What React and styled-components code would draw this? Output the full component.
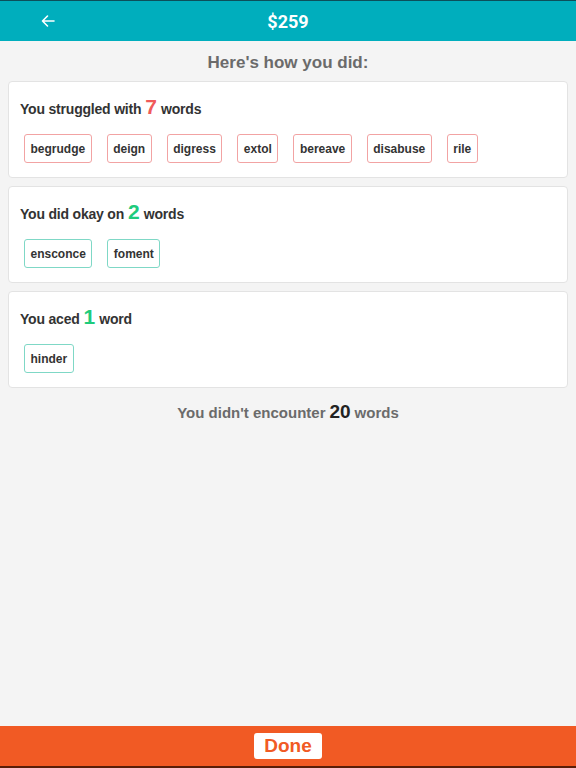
import React from "react";
import styled, { createGlobalStyle } from "styled-components";

const Global = createGlobalStyle`
  html, body { margin: 0; padding: 0; height: 100%; }
  body {
    background: #f4f4f4;
    font-family: "Liberation Sans", Arial, sans-serif;
    -webkit-font-smoothing: antialiased;
  }
  #root { height: 100%; }
`;

const Page = styled.div`
  height: 768px;
  display: flex;
  flex-direction: column;
  background: #f4f4f4;
`;

const Header = styled.header`
  height: 40px;
  border-top: 1px solid #0c4f5a;
  background: #00aebd;
  display: grid;
  grid-template-columns: 96px 1fr 96px;
  align-items: center;
`;

const BackButton = styled.button`
  border: 0;
  background: none;
  padding: 0;
  width: 96px;
  height: 40px;
  display: flex;
  align-items: center;
  justify-content: center;
  color: #fff;
  cursor: pointer;
`;

const Title = styled.h1`
  margin: 0;
  text-align: center;
  color: #fff;
  font-family: Roboto, "Liberation Sans", sans-serif;
  font-weight: 700;
  font-size: 18px;
`;

const Main = styled.main`
  flex: 1;
  padding: 0 8px;
  display: flex;
  flex-direction: column;
`;

const Subtitle = styled.h2`
  margin: 0;
  height: 40px;
  padding-top: 3px;
  box-sizing: border-box;
  display: flex;
  align-items: center;
  justify-content: center;
  color: #6b6b6b;
  font-size: 17px;
  font-weight: 700;
`;

const Card = styled.section`
  background: #fff;
  border: 1px solid #e3e3e3;
  border-radius: 4px;
  padding: 13px 11px 14px 11px;
  margin-bottom: 8px;
`;

const Heading = styled.h3`
  margin: 0;
  height: 25px;
  display: flex;
  align-items: baseline;
  color: #333;
  font-size: 14px;
  font-weight: 700;
  letter-spacing: -0.2px;
  line-height: 24px;
`;

const Count = styled.span`
  font-size: 21px;
  color: ${(p) => p.$color};
  margin: 0 4px;
  letter-spacing: 0;
`;

const ChipRow = styled.div`
  display: flex;
  flex-wrap: wrap;
  gap: 15px;
  margin: 14px 0 0 4px;
`;

const Chip = styled.span`
  height: 29px;
  box-sizing: border-box;
  padding: 0 5.5px;
  border: 1px solid ${(p) => p.$border};
  border-radius: 3px;
  display: inline-flex;
  align-items: center;
  color: #333;
  font-size: 12px;
  font-weight: 700;
`;

const Footnote = styled.p`
  margin: 0;
  height: 32px;
  display: flex;
  align-items: center;
  justify-content: center;
  color: #6b6b6b;
  font-size: 15px;
  font-weight: 700;
`;

const Big = styled.span`
  color: #222;
  font-size: 19px;
  margin: 0 4px;
`;

const Footer = styled.footer`
  height: 40px;
  border-bottom: 2px solid #5a1d08;
  background: #f15a24;
  display: flex;
  align-items: center;
  justify-content: center;
`;

const DoneButton = styled.button`
  width: 68px;
  height: 26px;
  border: 0;
  border-radius: 3px;
  background: #fff;
  color: #f15a24;
  font-family: "Liberation Sans", Arial, sans-serif;
  font-weight: 700;
  font-size: 19px;
  padding: 0;
  cursor: pointer;
`;

const RED = "#f05a5a";
const RED_BORDER = "#f2a3a3";
const GREEN = "#1ecb7c";
const GREEN_BORDER = "#7fd8c6";

const groups = [
  { pre: "You struggled with", n: 7, post: "words", color: RED, border: RED_BORDER,
    words: ["begrudge", "deign", "digress", "extol", "bereave", "disabuse", "rile"] },
  { pre: "You did okay on", n: 2, post: "words", color: GREEN, border: GREEN_BORDER,
    words: ["ensconce", "foment"] },
  { pre: "You aced", n: 1, post: "word", color: GREEN, border: GREEN_BORDER,
    words: ["hinder"] },
];

export default function App() {
  return (
    <>
      <Global />
      <Page>
        <Header>
          <BackButton aria-label="Back">
            <svg width="16" height="16" viewBox="0 0 16 16" fill="none" stroke="#fff" strokeWidth="1.6" strokeLinecap="round" strokeLinejoin="round">
              <path d="M14 8H2.5M7.5 3L2.5 8l5 5" />
            </svg>
          </BackButton>
          <Title>$259</Title>
          <span />
        </Header>
        <Main>
          <Subtitle>Here's how you did:</Subtitle>
          {groups.map((g) => (
            <Card key={g.pre}>
              <Heading>
                {g.pre}
                <Count $color={g.color}>{g.n}</Count>
                {g.post}
              </Heading>
              <ChipRow>
                {g.words.map((w) => (
                  <Chip key={w} $border={g.border}>{w}</Chip>
                ))}
              </ChipRow>
            </Card>
          ))}
          <Footnote>
            You didn't encounter<Big>20</Big>words
          </Footnote>
        </Main>
        <Footer>
          <DoneButton>Done</DoneButton>
        </Footer>
      </Page>
    </>
  );
}
